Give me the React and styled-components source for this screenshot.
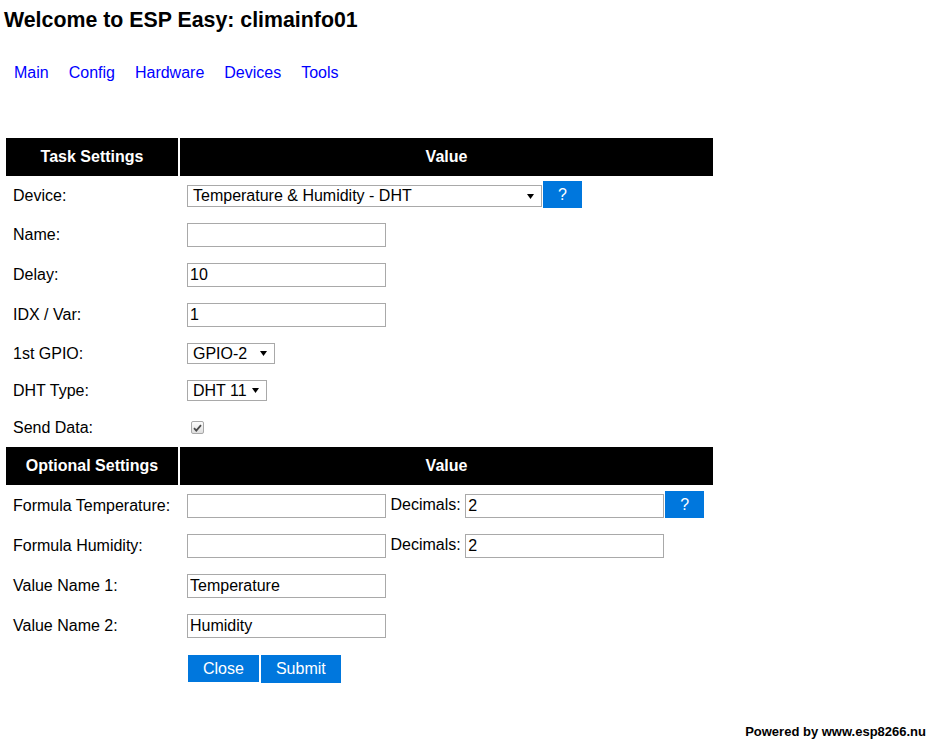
import React from "react";
import styled, { createGlobalStyle } from "styled-components";

const GlobalStyle = createGlobalStyle`
  body {
    margin: 0;
    background: #fff;
    color: #000;
    font-family: "Liberation Sans", Arial, sans-serif;
    font-size: 16px;
  }
`;

const Page = styled.div`
  padding: 0 4px;
`;

const Title = styled.h1`
  margin: 8px 0 0;
  font-size: 21.33px;
  font-weight: bold;
  color: black;
`;

const Nav = styled.div`
  margin-top: 31px;
`;

const MenuLink = styled.a`
  margin: 0 10px;
  color: blue;
  text-decoration: none;
  cursor: pointer;
`;

const Table = styled.table`
  margin-top: 54px;
  border-collapse: separate;
  border-spacing: 2px;
  color: black;
`;

const Th = styled.th`
  padding: 10px;
  background: black;
  color: #fff;
  font-weight: bold;
  text-align: center;
  width: ${(p) => p.$w}px;
`;

const Td = styled.td`
  padding: 7px;
  vertical-align: middle;
  white-space: nowrap;
`;

const TextInput = styled.input`
  box-sizing: border-box;
  width: 199px;
  height: 24px;
  margin: 0;
  padding: 1px 2px;
  border: 1px solid #a9a9a9;
  font-family: "Liberation Sans", Arial, sans-serif;
  font-size: 16px;
  color: #000;
  vertical-align: middle;
  outline: none;
`;

const SelectBox = styled.span`
  box-sizing: border-box;
  display: inline-flex;
  align-items: center;
  justify-content: space-between;
  width: ${(p) => p.$w}px;
  height: ${(p) => p.$h}px;
  padding: 0 7px 0 5px;
  border: 1px solid #a9a9a9;
  background: #fff;
  vertical-align: middle;
`;

const Arrow = styled.svg`
  width: 7px;
  height: 5px;
  flex: none;
`;

const HelpLink = styled.a`
  padding: 5px 15px;
  background: #0077dd;
  color: #fff;
  border: 1px solid #fff;
  text-decoration: none;
  cursor: pointer;
`;

const SubmitButton = styled.button`
  margin: 0;
  padding: 5px 15px;
  background: #0077dd;
  color: #fff;
  border: 1px solid #fff;
  font-family: "Liberation Sans", Arial, sans-serif;
  font-size: 16px;
  line-height: normal;
  cursor: pointer;
`;

const CheckBox = styled.span`
  box-sizing: border-box;
  display: inline-flex;
  align-items: center;
  justify-content: center;
  width: 13px;
  height: 13px;
  margin: 4px 3px 4px 4px;
  border: 1px solid #a8a8a8;
  border-radius: 2px;
  background: linear-gradient(#fcfcfc, #dedede);
  vertical-align: middle;
`;

const Footer = styled.div`
  margin-top: 31px;
  padding-right: 10px;
  text-align: right;
  font-size: 13px;
  font-weight: bold;
`;

const Select = ({ w, h, children }) => (
  <SelectBox $w={w} $h={h}>
    <span>{children}</span>
    <Arrow viewBox="0 0 7 5">
      <path d="M0 0h7L3.5 5z" fill="#000" />
    </Arrow>
  </SelectBox>
);

const Check = () => (
  <CheckBox>
    <svg width="9" height="8" viewBox="0 0 9 8">
      <path d="M1 4.2l2.3 2.4L8 1.2" fill="none" stroke="#4a4a4a" strokeWidth="1.8" />
    </svg>
  </CheckBox>
);

const menu = ["Main", "Config", "Hardware", "Devices", "Tools"];

export default function App() {
  return (
    <Page>
      <GlobalStyle />
      <Title>Welcome to ESP Easy: climainfo01</Title>
      <Nav>
        {menu.map((m) => (
          <MenuLink key={m}>{m}</MenuLink>
        ))}
      </Nav>
      <Table>
        <tbody>
          <tr>
            <Th $w={152}>Task Settings</Th>
            <Th $w={513}>Value</Th>
          </tr>
          <tr>
            <Td>Device:</Td>
            <Td>
              <Select w={355} h={22}>Temperature &amp; Humidity - DHT</Select>
              <HelpLink>?</HelpLink>
            </Td>
          </tr>
          <tr>
            <Td>Name:</Td>
            <Td>
              <TextInput defaultValue="" />
            </Td>
          </tr>
          <tr>
            <Td>Delay:</Td>
            <Td>
              <TextInput defaultValue="10" />
            </Td>
          </tr>
          <tr>
            <Td>IDX / Var:</Td>
            <Td>
              <TextInput defaultValue="1" />
            </Td>
          </tr>
          <tr>
            <Td>1st GPIO:</Td>
            <Td>
              <Select w={88} h={21}>GPIO-2</Select>
            </Td>
          </tr>
          <tr>
            <Td>DHT Type:</Td>
            <Td>
              <Select w={80} h={21}>DHT 11</Select>
            </Td>
          </tr>
          <tr>
            <Td>Send Data:</Td>
            <Td>
              <Check />
            </Td>
          </tr>
          <tr>
            <Th>Optional Settings</Th>
            <Th>Value</Th>
          </tr>
          <tr>
            <Td>Formula Temperature:</Td>
            <Td>
              <TextInput defaultValue="" /> Decimals:{" "}
              <TextInput defaultValue="2" />
              <HelpLink>?</HelpLink>
            </Td>
          </tr>
          <tr>
            <Td>Formula Humidity:</Td>
            <Td>
              <TextInput defaultValue="" /> Decimals:{" "}
              <TextInput defaultValue="2" />
            </Td>
          </tr>
          <tr>
            <Td>Value Name 1:</Td>
            <Td>
              <TextInput defaultValue="Temperature" />
            </Td>
          </tr>
          <tr>
            <Td>Value Name 2:</Td>
            <Td>
              <TextInput defaultValue="Humidity" />
            </Td>
          </tr>
          <tr>
            <Td></Td>
            <Td>
              <HelpLink>Close</HelpLink>
              <SubmitButton type="button">Submit</SubmitButton>
            </Td>
          </tr>
        </tbody>
      </Table>
      <Footer>Powered by www.esp8266.nu</Footer>
    </Page>
  );
}
